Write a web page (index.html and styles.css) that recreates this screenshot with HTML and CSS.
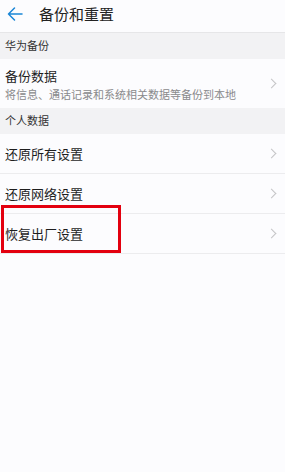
FILE: index.html
```html
<!DOCTYPE html>
<html lang="zh-CN">

<head>
    <meta charset="UTF-8">
    <meta name="viewport" content="width=device-width, initial-scale=1.0">
    <title>备份和重置</title>
    <link rel="stylesheet" href="styles.css">
</head>

<body>

    <div class="header">
        <svg class="back" width="16" height="14" viewBox="0 0 16 14">
            <path d="M15 7H1.5M7.5 1L1.5 7l6 6" fill="none" stroke="#1a86d6" stroke-width="1.5" stroke-linecap="round" stroke-linejoin="round"/>
        </svg>
        <h1>备份和重置</h1>
    </div>

    <div class="section-title">华为备份</div>
    <div class="item item-tall">
        <div class="item-text">
            <div class="item-label">备份数据</div>
            <div class="item-sub">将信息、通话记录和系统相关数据等备份到本地</div>
        </div>
        <span class="chevron"></span>
    </div>

    <div class="section-title">个人数据</div>
    <div class="item">
        <div class="item-label">还原所有设置</div>
        <span class="chevron"></span>
    </div>
    <div class="item">
        <div class="item-label">还原网络设置</div>
        <span class="chevron"></span>
    </div>
    <div class="item">
        <div class="item-label">恢复出厂设置</div>
        <span class="chevron"></span>
        <!-- red mark drawn over the row -->
        <div class="highlight"></div>
    </div>

</body>

</html>
```

FILE: styles.css
```css
body {
    font-family: "Noto Sans CJK SC", "Noto Sans", sans-serif;
    background-color: #fcfcfe;
    margin: 0;
    padding: 0;
    color: #1e1e1e;
}

.header {
    height: 32px;
    display: flex;
    align-items: center;
    padding-left: 7px;
    border-bottom: 1px solid #e6e6e8;
}

.header .back {
    margin-right: 16px;
    margin-top: -4px;
}

.header h1 {
    font-size: 15px;
    font-weight: normal;
    margin: 0;
    margin-top: -5px;
    color: #222;
}

.section-title {
    background-color: #f2f2f4;
    height: 26px;
    line-height: 25px;
    font-size: 11px;
    padding-left: 5px;
    color: #333;
}

.item {
    position: relative;
    height: 39px;
    display: flex;
    align-items: center;
    justify-content: space-between;
    padding: 0 8px 0 5px;
    border-bottom: 1px solid #ececee;
}

.item-tall {
    height: 49px;
    border-bottom: none;
}

.item-label {
    font-size: 13px;
    color: #1e1e1e;
}

.item-sub {
    font-size: 11px;
    color: #8a8a8c;
    margin-top: 1px;
}

.chevron {
    width: 6px;
    height: 6px;
    border-top: 1px solid #c4c4c6;
    border-right: 1px solid #c4c4c6;
    transform: rotate(45deg);
    margin-right: 2px;
}

.highlight {
    position: absolute;
    left: 1px;
    top: -9px;
    width: 114px;
    height: 42px;
    border: 3px solid #e3000f;
}
```
